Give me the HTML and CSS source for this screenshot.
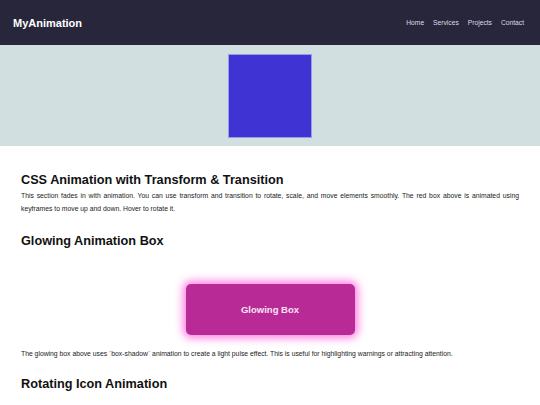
FILE: index.html
```
<!DOCTYPE html>
<html lang="en">
<head>
    <meta charset="UTF-8">
    <meta name="viewport" content="width=device-width, initial-scale=1.0">
    <title>MyAnimation</title>
    <link rel="stylesheet" href="styles.css">
</head>
<body>
<nav class="navbar">
    <div class="logo">MyAnimation</div>
    <div class="nav-links">
        <a href="#">Home</a>
        <a href="#">Services</a>
        <a href="#">Projects</a>
        <a href="#">Contact</a>
    </div>
</nav>

<div class="hero">
    <div class="move-box"></div>
</div>

<div class="content">
    <section class="intro">
        <h2>CSS Animation with Transform &amp; Transition</h2>
        <p>This section fades in with animation. You can use transform and transition to rotate, scale, and move elements smoothly. The red box above is animated using keyframes to move up and down. Hover to rotate it.</p>
    </section>

    <section class="glow-section">
        <h2>Glowing Animation Box</h2>
        <div class="glow-wrap">
            <div class="glow-box">Glowing Box</div>
        </div>
        <p>The glowing box above uses `box-shadow` animation to create a light pulse effect. This is useful for highlighting warnings or attracting attention.</p>
    </section>

    <section class="rotate-section">
        <h2>Rotating Icon Animation</h2>
    </section>
</div>
</body>
</html>
```

FILE: styles.css
```
*{
    box-sizing: border-box;
}
body{
    margin: 0;
    font-family: "Liberation Sans", Arial, sans-serif;
    color: #111;
    background-color: #fff;
}

.navbar{
    height: 45px;
    display: flex;
    justify-content: space-between;
    align-items: center;
    padding: 0 16px 0 13px;
    background-color: #27263b;
}
.logo{
    font-size: 11px;
    font-weight: bold;
    color: #fff;
}
.nav-links{
    display: flex;
    gap: 9px;
}
.nav-links a{
    font-size: 6.7px;
    color: #dcdce8;
    text-decoration: none;
}

.hero{
    display: flex;
    justify-content: center;
    padding: 9px 0 8px;
    background-color: #d2dfe0;
}
.move-box{
    width: 84px;
    height: 84px;
    background-color: #3f33d3;
    border: 1px solid #9c9ae4;
}

.content{
    padding: 0 21px;
}
h2{
    font-size: 12.7px;
    margin: 0;
}
p{
    font-size: 6.8px;
    line-height: 13px;
    color: #222;
    margin: 0;
}
.intro{
    padding-top: 27px;
}
.intro p{
    margin-top: 2px;
    text-align: justify;
}
.glow-section{
    margin-top: 19px;
}
.glow-wrap{
    display: flex;
    justify-content: center;
    padding: 36px 0 12px;
}
.glow-box{
    width: 169px;
    height: 51px;
    display: flex;
    align-items: center;
    justify-content: center;
    border-radius: 5px;
    background-color: #b82a96;
    color: #fbe6f4;
    font-size: 9.5px;
    font-weight: bold;
    box-shadow: 0 0 9px 3px #ff7ee2;
}
.rotate-section{
    margin-top: 17px;
}
```
